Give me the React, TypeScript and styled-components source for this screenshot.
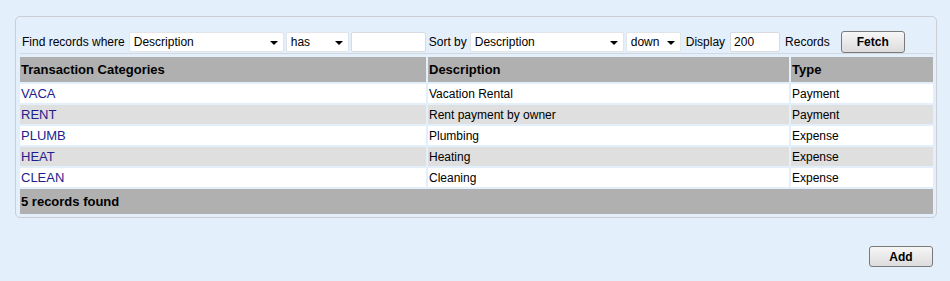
import styled, { createGlobalStyle } from "styled-components";

const GlobalStyle = createGlobalStyle`
  body {
    margin: 0;
    background: #e4effc;
    font-family: "Liberation Sans", Arial, sans-serif;
    font-size: 12px;
    color: #000;
  }
`;

const Page = styled.div`
  padding: 16px 13px 0 15px;
`;

const Panel = styled.div`
  border: 1px solid #c9ced4;
  border-radius: 5px;
  padding: 13px 1px 1px 2px;
`;

const Toolbar = styled.div`
  display: flex;
  align-items: center;
  height: 23px;
  margin: 0 1px 1px 2px;
  padding-left: 2px;
  border-bottom: 1px solid #d3d8de;
`;

const Label = styled.span<{ $left?: number; $right?: number }>`
  margin-left: ${(p) => p.$left ?? 0}px;
  margin-right: ${(p) => p.$right ?? 4}px;
  white-space: nowrap;
`;

const SelectBox = styled.div<{ $width: number }>`
  position: relative;
  box-sizing: border-box;
  width: ${(p) => p.$width}px;
  height: 20px;
  margin-right: 2px;
  padding: 0 0 0 4px;
  display: flex;
  align-items: center;
  background: #fff;
  border: 1px solid #e1e4e8;
  border-radius: 2px;

  &::after {
    content: "";
    position: absolute;
    right: 5px;
    top: 8px;
    border-left: 4px solid transparent;
    border-right: 4px solid transparent;
    border-top: 4px solid #000;
  }
`;

const TextInput = styled.input<{ $width: number }>`
  box-sizing: border-box;
  width: ${(p) => p.$width}px;
  height: 20px;
  margin: 0;
  padding: 0 3px;
  font: inherit;
  background: #fff;
  border: 1px solid #d8dce1;
  border-radius: 2px;
  outline: none;
`;

const Button = styled.button<{ $height: number }>`
  width: 64px;
  height: ${(p) => p.$height}px;
  padding: 0;
  font-family: "Liberation Sans", Arial, sans-serif;
  font-size: 12px;
  font-weight: bold;
  color: #000;
  background: linear-gradient(#f6f6f6, #dcdcdc);
  border: 1px solid #7a7a7a;
  border-radius: 3px;
`;

const Table = styled.table`
  width: 100%;
  border-collapse: separate;
  border-spacing: 2px;
`;

const HeadCell = styled.th<{ $width?: number }>`
  width: ${(p) => (p.$width ? `${p.$width}px` : "auto")};
  height: 25px;
  padding: 0 1px;
  text-align: left;
  font-size: 13px;
  font-weight: bold;
  background: #b0b0b0;
`;

const Row = styled.tr<{ $alt: boolean }>`
  background: ${(p) => (p.$alt ? "#dfdfdf" : "#fff")};
`;

const Cell = styled.td`
  height: 19px;
  padding: 0 1px;
`;

const CodeLink = styled.a`
  color: #231c8f;
  text-decoration: none;
  font-size: 13px;
`;

const FooterCell = styled.td`
  height: 25px;
  padding: 0 1px;
  font-size: 13px;
  font-weight: bold;
  background: #b0b0b0;
`;

const Actions = styled.div`
  display: flex;
  justify-content: flex-end;
  margin: 28px 4px 0 0;
`;

const rows = [
  { code: "VACA", desc: "Vacation Rental", type: "Payment" },
  { code: "RENT", desc: "Rent payment by owner", type: "Payment" },
  { code: "PLUMB", desc: "Plumbing", type: "Expense" },
  { code: "HEAT", desc: "Heating", type: "Expense" },
  { code: "CLEAN", desc: "Cleaning", type: "Expense" },
];

export default function App() {
  return (
    <>
      <GlobalStyle />
      <Page>
        <Panel>
          <Toolbar>
            <Label>Find records where</Label>
            <SelectBox $width={155}>Description</SelectBox>
            <SelectBox $width={63}>has</SelectBox>
            <TextInput $width={75} />
            <Label $left={3} $right={3}>Sort by</Label>
            <SelectBox $width={154}>Description</SelectBox>
            <SelectBox $width={55}>down</SelectBox>
            <Label $left={3} $right={5}>Display</Label>
            <TextInput $width={50} defaultValue="200" />
            <Label $left={5} $right={11}>Records</Label>
            <Button $height={22}>Fetch</Button>
          </Toolbar>
          <Table>
            <thead>
              <tr>
                <HeadCell $width={404}>Transaction Categories</HeadCell>
                <HeadCell $width={359}>Description</HeadCell>
                <HeadCell>Type</HeadCell>
              </tr>
            </thead>
            <tbody>
              {rows.map((r, i) => (
                <Row key={r.code} $alt={i % 2 === 1}>
                  <Cell>
                    <CodeLink href="#">{r.code}</CodeLink>
                  </Cell>
                  <Cell>{r.desc}</Cell>
                  <Cell>{r.type}</Cell>
                </Row>
              ))}
              <tr>
                <FooterCell colSpan={3}>5 records found</FooterCell>
              </tr>
            </tbody>
          </Table>
        </Panel>
        <Actions>
          <Button $height={21}>Add</Button>
        </Actions>
      </Page>
    </>
  );
}
